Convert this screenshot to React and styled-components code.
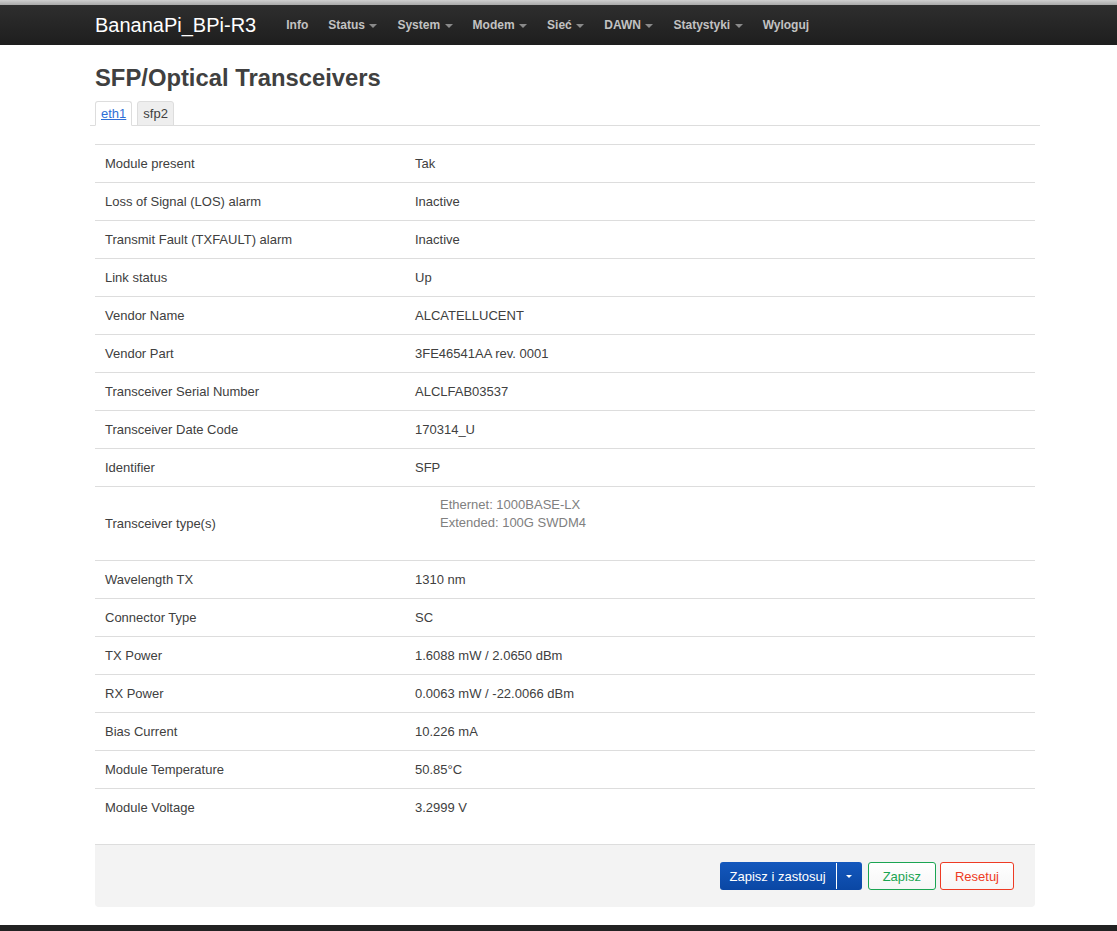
import React from "react";
import styled, { createGlobalStyle } from "styled-components";

const GlobalStyle = createGlobalStyle`
  body {
    margin: 0;
    background: #fff;
    font-family: "Liberation Sans", Arial, sans-serif;
    font-size: 13px;
    color: #404040;
  }
`;

const rows = [
  ["Module present", "Tak"],
  ["Loss of Signal (LOS) alarm", "Inactive"],
  ["Transmit Fault (TXFAULT) alarm", "Inactive"],
  ["Link status", "Up"],
  ["Vendor Name", "ALCATELLUCENT"],
  ["Vendor Part", "3FE46541AA rev. 0001"],
  ["Transceiver Serial Number", "ALCLFAB03537"],
  ["Transceiver Date Code", "170314_U"],
  ["Identifier", "SFP"],
  ["Transceiver type(s)", ["Ethernet: 1000BASE-LX", "Extended: 100G SWDM4"]],
  ["Wavelength TX", "1310 nm"],
  ["Connector Type", "SC"],
  ["TX Power", "1.6088 mW / 2.0650 dBm"],
  ["RX Power", "0.0063 mW / -22.0066 dBm"],
  ["Bias Current", "10.226 mA"],
  ["Module Temperature", "50.85°C"],
  ["Module Voltage", "3.2999 V"],
];

const menu = [
  { name: "Info" },
  { name: "Status", drop: true },
  { name: "System", drop: true },
  { name: "Modem", drop: true },
  { name: "Sieć", drop: true },
  { name: "DAWN", drop: true },
  { name: "Statystyki", drop: true },
  { name: "Wyloguj" },
];

const App = () => {
  return (
    <>
      <GlobalStyle />
      <TopStrip />
      <Navbar>
        <Brand>BananaPi_BPi-R3</Brand>
        <Nav>
          {menu.map((m) => (
            <NavItem key={m.name}>
              {m.name}
              {m.drop && <Caret />}
            </NavItem>
          ))}
        </Nav>
      </Navbar>

      <Main>
        <Title>SFP/Optical Transceivers</Title>
        <Tabs>
          <Tab active>
            <TabLink>eth1</TabLink>
          </Tab>
          <Tab>sfp2</Tab>
        </Tabs>

        <Table>
          {rows.map(([label, value]) =>
            Array.isArray(value) ? (
              <Row key={label}>
                <Label>{label}</Label>
                <TypeList>
                  {value.map((v) => (
                    <li key={v}>{v}</li>
                  ))}
                </TypeList>
              </Row>
            ) : (
              <Row key={label}>
                <Label>{label}</Label>
                <Value>{value}</Value>
              </Row>
            )
          )}
        </Table>

        <Actions>
          <SplitButton>
            <SplitMain>Zapisz i zastosuj</SplitMain>
            <SplitToggle>
              <SmallCaret />
            </SplitToggle>
          </SplitButton>
          <OutlineButton color="#1aa552" pad="14px">
            Zapisz
          </OutlineButton>
          <OutlineButton color="#ee3b24" pad="14px">
            Resetuj
          </OutlineButton>
        </Actions>
      </Main>

      <Footer />
    </>
  );
};

const TopStrip = styled.div`
  height: 5px;
  background: linear-gradient(#cfcfcf, #a9a9a9);
`;

const Navbar = styled.div`
  display: flex;
  align-items: center;
  height: 40px;
  padding-left: 95px;
  background: linear-gradient(#2e2e2e, #1e1e1e);
`;

const Brand = styled.div`
  font-size: 20px;
  color: #fff;
  margin-right: 20px;
`;

const Nav = styled.div`
  display: flex;
  align-items: center;
`;

const NavItem = styled.div`
  display: flex;
  align-items: center;
  padding: 0 10px;
  font-size: 12px;
  font-weight: bold;
  color: #c2c2c2;
`;

const Caret = styled.span`
  margin-left: 4.5px;
  margin-top: 1px;
  border-top: 4px solid #8a8a8a;
  border-left: 4px solid transparent;
  border-right: 4px solid transparent;
`;

const Main = styled.div`
  width: 945px;
  margin-left: 95px;
`;

const Title = styled.h2`
  margin: 20px 0 10px;
  font-size: 23.8px;
  line-height: 26px;
  font-weight: bold;
  color: #404040;
`;

const Tabs = styled.div`
  display: flex;
  gap: 5px;
  margin-left: -5px;
  padding-left: 5px;
  border-bottom: 1px solid #ddd;
`;

const Tab = styled.div`
  height: 23px;
  padding: 0 5px;
  display: flex;
  align-items: center;
  margin-bottom: -1px;
  border: 1px solid #ddd;
  border-bottom-color: ${(p) => (p.active ? "#fff" : "#ddd")};
  border-radius: 3px 3px 0 0;
  background: ${(p) => (p.active ? "#fff" : "#eee")};
  color: #404040;
`;

const TabLink = styled.span`
  color: #2f6fd6;
  text-decoration: underline;
`;

const Table = styled.div`
  width: 940px;
  margin-top: 18px;
`;

const Row = styled.div`
  display: flex;
  border-top: 1px solid #ddd;
`;

const Label = styled.div`
  width: 310px;
  padding-left: 10px;
  display: flex;
  align-items: center;
`;

const Value = styled.div`
  flex: 1;
  height: 37px;
  display: flex;
  align-items: center;
`;

const TypeList = styled.ul`
  flex: 1;
  list-style: none;
  margin: 0;
  padding: 9px 0 28px 25px;
  line-height: 18px;
  color: #808080;
`;

const Actions = styled.div`
  display: flex;
  justify-content: flex-end;
  gap: 4px;
  width: 940px;
  box-sizing: border-box;
  margin-top: 18px;
  padding: 17px 21px 17px 0;
  background: #f3f3f3;
  border-top: 1px solid #ddd;
  border-radius: 0 0 4px 4px;
`;

const SplitButton = styled.div`
  display: flex;
  height: 28px;
  margin-right: 2px;
  border-radius: 3px;
  background: linear-gradient(#1458bd, #0a47a4);
  color: #fff;
`;

const SplitMain = styled.div`
  display: flex;
  align-items: center;
  padding: 0 10px;
  border-right: 1px solid #fff;
  margin: 1px 0;
`;

const SplitToggle = styled.div`
  display: flex;
  align-items: center;
  justify-content: center;
  width: 25px;
`;

const SmallCaret = styled.span`
  border-top: 3px solid #fff;
  border-left: 3px solid transparent;
  border-right: 3px solid transparent;
`;

const OutlineButton = styled.div`
  display: flex;
  align-items: center;
  height: 26px;
  padding: 0 ${(p) => p.pad};
  border: 1px solid ${(p) => p.color};
  border-radius: 3px;
  color: ${(p) => p.color};
  background: linear-gradient(#fff, #f6f6f6);
`;

const Footer = styled.div`
  height: 40px;
  margin-top: 18px;
  background: #222;
`;

export default App;
